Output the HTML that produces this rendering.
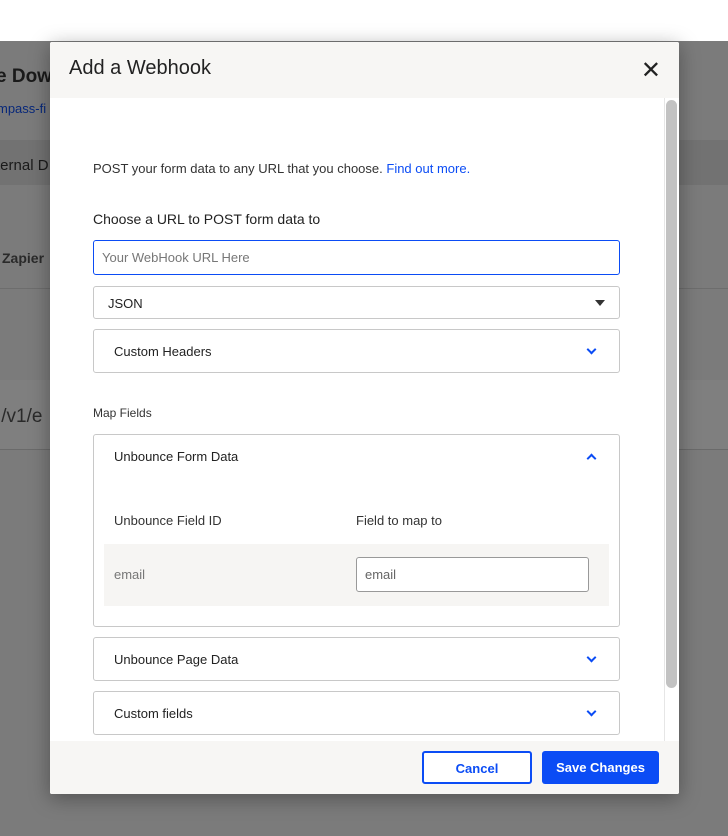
<!DOCTYPE html>
<html><head><style>
*{box-sizing:border-box;margin:0;padding:0}
body{width:728px;height:836px;position:relative;overflow:hidden;font-family:"Liberation Sans",sans-serif;background:#7b7b7b}
.top{position:absolute;left:0;top:0;width:728px;height:41px;background:#fff}
.bg{position:absolute;color:#222}
.m{position:absolute;left:50px;top:42px;width:629px;height:752px;background:#fff;border-radius:2px;box-shadow:0 4px 20px rgba(0,0,0,.35);overflow:hidden}
.hd{height:56px;background:#f7f6f4;padding:15px 19px;font-size:20px;color:#222}
.x{position:absolute;right:18px;top:14px;font-size:24px;color:#222}
.t{position:absolute;font-size:13px;color:#333}
.box{position:absolute;left:43px;width:527px;border:1px solid #c8c8c8;border-radius:3px;background:#fff}
.chev{position:absolute;right:24px;width:7px;height:7px;border-right:2px solid #0b4cf5;border-bottom:2px solid #0b4cf5;transform:rotate(45deg)}
.up{transform:rotate(-135deg)}
.ft{position:absolute;left:0;top:699px;width:629px;height:53px;background:#f7f6f4}
.btn{position:absolute;top:10px;height:33px;border-radius:3px;font-size:13px;font-weight:bold;text-align:center;line-height:31px}
</style></head><body>
<div class="top"></div>
<div class="bg" style="left:0;top:140px;width:728px;height:45px;background:#727272"></div>
<div class="bg" style="left:0;top:380px;width:728px;height:70px;background:#7f7f7f;border-bottom:1px solid #6a6a6a"></div>
<div class="bg" style="left:0;top:288px;width:728px;height:1px;background:#6d6d6d"></div>
<div class="bg" style="left:-4px;top:66px;font-size:19px;font-weight:bold;color:#1a1a1a">e Dow</div>
<div class="bg" style="left:-3px;top:101px;font-size:13px;color:#08287a">mpass-fi</div>
<div class="bg" style="left:-4px;top:157px;font-size:15px;color:#1a1a1a">ternal D</div>
<div class="bg" style="left:2px;top:250px;font-size:14px;font-weight:bold;color:#2a2a2a">Zapier</div>
<div class="bg" style="left:-3px;top:406px;font-size:19px;color:#2a2a2a">i/v1/e</div>
<div class="m">
<div class="hd">Add a Webhook</div>
<div class="x">✕</div>
<div style="position:absolute;left:616px;top:58px;width:11px;height:588px;background:#c2c2c2;border-radius:6px"></div>
<div style="position:absolute;left:614px;top:56px;width:1px;height:643px;background:#e6e6e6"></div>
<div class="t" style="left:43px;top:119px">POST your form data to any URL that you choose. <span style="color:#0b4cf5">Find out more.</span></div>
<div class="t" style="left:43px;top:169px;font-size:14px;color:#222">Choose a URL to POST form data to</div>
<div class="box" style="top:198px;height:35px;border-color:#0b4cf5;padding:9px 8px;font-size:13px;color:#777">Your WebHook URL Here</div>
<div class="box" style="top:244px;height:33px;padding:9px 14px;font-size:13px;color:#222">JSON<div style="position:absolute;right:14px;top:13px;border-left:5px solid transparent;border-right:5px solid transparent;border-top:6px solid #333"></div></div>
<div class="box" style="top:287px;height:44px;padding:14px 20px;font-size:13px;color:#222">Custom Headers<div class="chev" style="top:16px"></div></div>
<div class="t" style="left:43px;top:364px;font-size:12px">Map Fields</div>
<div class="box" style="top:392px;height:193px">
<div class="t" style="left:20px;top:14px;color:#222">Unbounce Form Data</div><div class="chev up" style="top:20px"></div>
<div class="t" style="left:20px;top:78px">Unbounce Field ID</div>
<div class="t" style="left:262px;top:78px">Field to map to</div>
<div style="position:absolute;left:10px;top:109px;width:505px;height:62px;background:#f6f5f3">
<div class="t" style="left:10px;top:23px;color:#777">email</div>
<div style="position:absolute;left:252px;top:13px;width:233px;height:35px;background:#fff;border:1px solid #999;border-radius:3px;padding:9px 8px;font-size:13px;color:#666">email</div>
</div>
</div>
<div class="box" style="top:595px;height:44px;padding:14px 20px;font-size:13px;color:#222">Unbounce Page Data<div class="chev" style="top:16px"></div></div>
<div class="box" style="top:649px;height:44px;padding:14px 20px;font-size:13px;color:#222">Custom fields<div class="chev" style="top:16px"></div></div>
<div class="ft">
<div class="btn" style="left:372px;width:110px;border:2px solid #0b4cf5;color:#0b4cf5;background:#fff">Cancel</div>
<div class="btn" style="left:492px;width:117px;background:#0b4cf5;color:#fff;line-height:33px">Save Changes</div>
</div>
</div>
</body></html>
